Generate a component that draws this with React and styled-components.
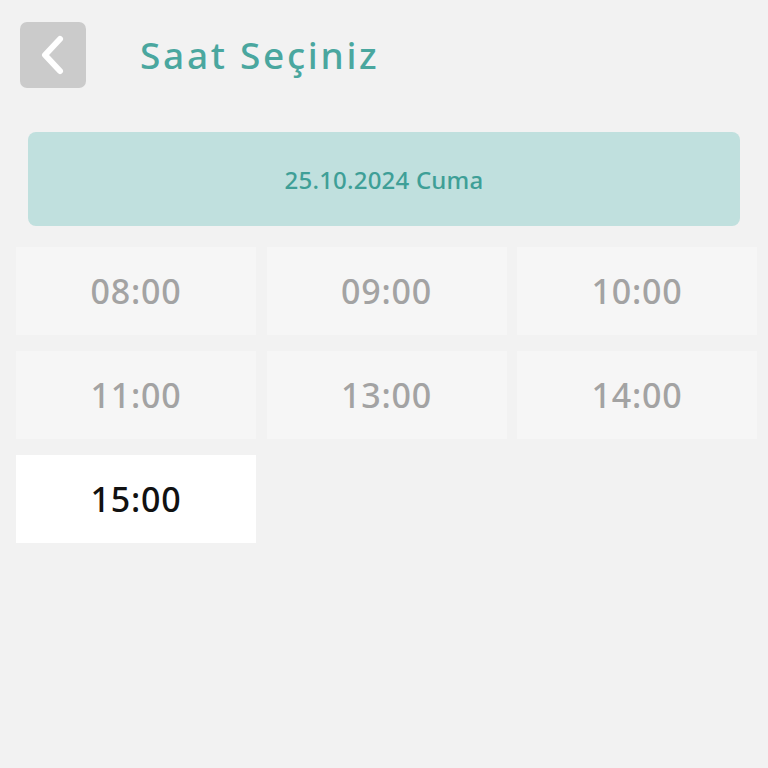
import React from "react";
import styled, { createGlobalStyle } from "styled-components";

const Global = createGlobalStyle`
  html, body { margin: 0; padding: 0; background: #f2f2f2; }
  body { font-family: "Noto Sans", "Open Sans", sans-serif; }
`;

const Page = styled.div`
  width: 768px;
  min-height: 768px;
  background: #f2f2f2;
  box-sizing: border-box;
  padding-top: 22px;
`;

const Header = styled.div`
  display: flex;
  align-items: center;
  padding-left: 20px;
  gap: 54px;
  height: 66px;
`;

const BackButton = styled.button`
  width: 66px;
  height: 66px;
  border: none;
  border-radius: 7px;
  background: #cbcbcb;
  display: flex;
  align-items: center;
  justify-content: center;
  padding: 0;
`;

const Title = styled.h1`
  margin: 0;
  font-size: 37px;
  font-weight: 500;
  color: #4aa79f;
  letter-spacing: 2.7px;
  line-height: 1;
  padding-bottom: 2px;
`;

const DateBanner = styled.div`
  margin: 44px 28px 0 28px;
  height: 94px;
  border-radius: 8px;
  background: #c0e0de;
  display: flex;
  align-items: center;
  justify-content: center;
  color: #3e9f97;
  font-size: 24px;
  font-weight: 500;
  letter-spacing: 0.2px;
`;

const Grid = styled.div`
  display: grid;
  grid-template-columns: repeat(3, 240px);
  column-gap: 10.5px;
  row-gap: 16px;
  padding: 21px 11px 0 16px;
`;

const Slot = styled.div`
  height: 88px;
  display: flex;
  align-items: center;
  justify-content: center;
  background: ${(p) => (p.$available ? "#ffffff" : "#f6f6f6")};
  color: ${(p) => (p.$available ? "#111111" : "#a3a3a3")};
  font-size: 34px;
  font-weight: 500;
  letter-spacing: 0.8px;
`;

const slots = [
  { t: "08:00" },
  { t: "09:00" },
  { t: "10:00" },
  { t: "11:00" },
  { t: "13:00" },
  { t: "14:00" },
  { t: "15:00", available: true },
];

export default function App() {
  return (
    <Page>
      <Global />
      <Header>
        <BackButton aria-label="Geri">
          <svg width="30" height="42" viewBox="0 0 30 42">
            <path
              d="M22 5 L7 21 L22 37"
              fill="none"
              stroke="#ffffff"
              strokeWidth="6"
              strokeLinecap="round"
              strokeLinejoin="round"
            />
          </svg>
        </BackButton>
        <Title>Saat Seçiniz</Title>
      </Header>
      <DateBanner>25.10.2024 Cuma</DateBanner>
      <Grid>
        {slots.map((s) => (
          <Slot key={s.t} $available={s.available}>
            {s.t}
          </Slot>
        ))}
      </Grid>
    </Page>
  );
}
